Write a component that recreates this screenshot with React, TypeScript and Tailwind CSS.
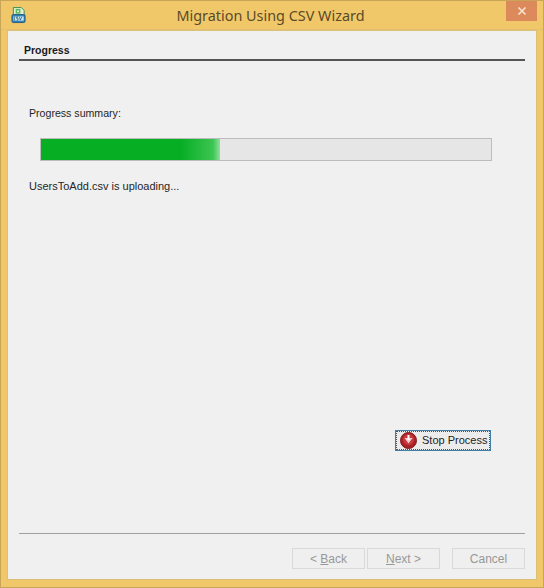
const uiFont = "font-['Liberation_Sans',sans-serif]";

function CsvIcon() {
  return (
    <svg width="15" height="17" viewBox="0 0 16 18" className="shrink-0">
      <path d="M2.5 0.5H11L14 3.5V9H2.5Z" fill="#dcefd0" stroke="#3d8a5a" />
      <rect x="5" y="2" width="5" height="5" fill="#5cb85c" />
      <path d="M6.5 4.5H8.5M7.5 3.5V5.5" stroke="#fff" />
      <rect x="1" y="8" width="14" height="8.5" rx="1.5" fill="#2a86b8" stroke="#24597a" />
      <rect x="2.5" y="10" width="11" height="4.5" fill="#cfe8f4" />
      <path d="M4.5 10.5H3.5V14H4.5M7.5 10.5H6V12H7.5V14H6M9 10.5L10 14L11.5 10.5" fill="none" stroke="#24597a" strokeWidth="0.8" />
    </svg>
  );
}

function StopIcon() {
  return (
    <svg width="17" height="17" viewBox="0 0 17 17" className="shrink-0">
      <circle cx="8.5" cy="8.5" r="8" fill="#a92227" stroke="#7e1a1d" />
      <circle cx="8.5" cy="7.5" r="5.5" fill="#c9383d" />
      <path d="M4.5 6H12.5L8.5 11.5Z" fill="#f0cfcf" />
      <path d="M8.5 3V8" stroke="#fff" strokeWidth="2" />
    </svg>
  );
}

function WizardButton({ label, hotkey, rest }: { label?: string; hotkey?: string; rest: string }) {
  return (
    <div className="flex h-[21px] w-[73px] items-center justify-center whitespace-pre border border-[#d9d9d9] bg-[#efefef] text-[12px] text-[#989898]">
      {label}
      {hotkey && <span className="underline">{hotkey}</span>}
      {rest}
    </div>
  );
}

export default function App() {
  return (
    <div className={`flex h-[588px] w-[544px] flex-col overflow-hidden border border-[#c9a657] bg-[#f0c869] ${uiFont}`}>
      {/* Title bar */}
      <div className="relative flex h-[29px] shrink-0 items-center justify-center border-b border-[#e3c16f] pr-[3px]">
        <div className="absolute left-[10px] top-[6px]">
          <CsvIcon />
        </div>
        <span className="mt-[1px] font-['Noto_Sans',sans-serif] text-[14.4px] text-[#5b4a28]">Migration Using CSV Wizard</span>
        <div className="absolute right-[6px] top-0 flex h-[20px] w-[31px] items-center justify-center bg-[#dc8a5c]">
          <svg width="10" height="10" viewBox="0 0 10 10">
            <path d="M1.5 1.5L8.5 8.5M8.5 1.5L1.5 8.5" stroke="#f8e4d4" strokeWidth="1.6" />
          </svg>
        </div>
      </div>

      {/* Client area */}
      <div className="mx-[6px] mb-[7px] flex min-h-0 flex-1 flex-col border border-[#dcc07a] bg-[#f0f0f0] text-[11px] text-[#262626]">
        <div className="mx-[11px] mt-[12px] border-b-2 border-[#555555] pb-[2px] pl-[5px] leading-[14px]">
          <span className="text-[10.5px] font-bold text-[#1a1a1a]">Progress</span>
        </div>

        <div className="flex flex-1 flex-col">
          <div className="ml-[21px] mt-[44px] text-[10.6px] leading-[16px]">Progress summary:</div>
          <div className="ml-[32px] mt-[17px] h-[23px] w-[452px] border border-[#bcbcbc] bg-[#e6e6e6]">
            <div className="h-full w-[179px] bg-[linear-gradient(to_right,#06ae24_0%,#06ae24_78%,#3cc552_96%,#8fdf9c_100%)]" />
          </div>
          <div className="ml-[21px] mt-[17px] leading-[16px]">UsersToAdd.csv is uploading...</div>

          <div className="mr-[45px] mt-[236px] flex justify-end">
            <div className="flex h-[21px] w-[96px] items-center gap-[5px] whitespace-nowrap border border-[#3f7fa8] bg-[#ececec] pl-[4px] outline-1 -outline-offset-2 outline-dotted outline-[#555555]">
              <StopIcon />
              <span className="text-[11px] text-[#222222]">Stop Process</span>
            </div>
          </div>
        </div>

        <div className="mx-[11px] mb-[14px] border-b border-[#a0a0a0]" />
        <div className="mb-[10px] mr-[11px] flex justify-end">
          <WizardButton label="< " hotkey="B" rest="ack" />
          <div className="w-[2px]" />
          <WizardButton hotkey="N" rest="ext >" />
          <div className="w-[12px]" />
          <WizardButton label="Cancel" rest="" />
        </div>
      </div>
    </div>
  );
}
